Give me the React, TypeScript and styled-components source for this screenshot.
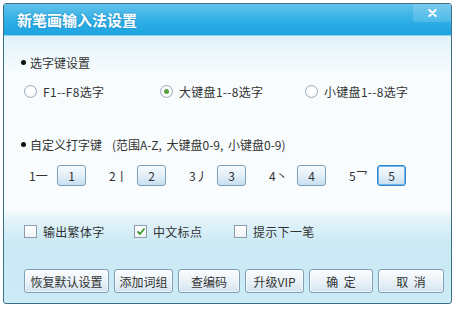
import React from "react";
import styled, { createGlobalStyle } from "styled-components";

const Global = createGlobalStyle`
  html, body {
    margin: 0;
    padding: 0;
    background: #ffffff;
  }
  body {
    font-family: "Noto Sans CJK SC", "Noto Sans", sans-serif;
    font-size: 12px;
    color: #333333;
  }
`;

const SWindow = styled.div`
  margin: 3px 0 0 3px;
  width: 447px;
  height: 299px;
  border: 1px solid #3f6f86;
  border-radius: 3px;
  overflow: hidden;
  display: flex;
  flex-direction: column;
  background: linear-gradient(
    to bottom,
    #bfe6f4 0px,
    #e6f5fa 40px,
    #f8fcfd 70px,
    #f8fcfd 205px,
    #e4f3f9 215px,
    #c9e9f5 240px,
    #cdebf6 100%
  );
`;

const STitleBar = styled.div`
  height: 31px;
  display: flex;
  align-items: center;
  justify-content: space-between;
  padding-left: 13px;
  background: linear-gradient(to bottom, #62c3ec 0%, #2eaee6 55%, #1da4e0 100%);
  border-bottom: 1px solid #8fd3ef;
`;

const STitle = styled.h1`
  margin: 0;
  font-size: 15px;
  font-weight: 700;
  color: #ffffff;
  text-shadow: 0 0 2px rgba(0, 80, 130, 0.45);
`;

const SClose = styled.div`
  align-self: flex-start;
  width: 38px;
  height: 18px;
  display: flex;
  align-items: center;
  justify-content: center;
  background: linear-gradient(to bottom, #78cbee, #4cb9e8);
  border-bottom-left-radius: 2px;
`;

const SBody = styled.div`
  flex: 1;
  display: flex;
  flex-direction: column;
  padding: 0 0 0 17px;
`;

const SHeading = styled.div<{ $top: number }>`
  margin-top: ${(p) => p.$top}px;
  height: 16px;
  display: flex;
  align-items: center;
  gap: 4px;
  white-space: pre;
  &::before {
    content: "";
    width: 5px;
    height: 5px;
    border-radius: 50%;
    background: #111111;
  }
`;

const SRange = styled.span`
  margin-left: 6px;
  word-spacing: 2px;
`;

const SRow = styled.div<{ $top: number }>`
  margin-top: ${(p) => p.$top}px;
  display: flex;
  align-items: center;
`;

const SOption = styled.label<{ $width: number }>`
  width: ${(p) => p.$width}px;
  display: flex;
  align-items: center;
  gap: 6px;
  padding-left: 3px;
  box-sizing: border-box;
  letter-spacing: 0.3px;
`;

const SRadio = styled.span<{ $checked?: boolean }>`
  width: 13px;
  height: 13px;
  border-radius: 50%;
  border: 1px solid #9ea9b8;
  box-sizing: border-box;
  background: radial-gradient(circle at 50% 40%, #ffffff 40%, #e8ecf2 100%);
  display: flex;
  align-items: center;
  justify-content: center;
  &::after {
    content: "";
    display: ${(p) => (p.$checked ? "block" : "none")};
    width: 5px;
    height: 5px;
    border-radius: 50%;
    background: #5aa03a;
  }
`;

const SCheck = styled.span`
  width: 13px;
  height: 13px;
  border: 1px solid #8f9caa;
  box-sizing: border-box;
  background: linear-gradient(to bottom, #ffffff, #f1f3f6);
  display: flex;
  align-items: center;
  justify-content: center;
`;

const SKeyGroup = styled.div`
  width: 80px;
  display: flex;
  align-items: center;
`;

const SStroke = styled.span`
  width: 36px;
  padding-left: 8px;
  box-sizing: border-box;
  white-space: nowrap;
`;

const SKey = styled.div<{ $active?: boolean }>`
  width: 29px;
  height: 21px;
  box-sizing: border-box;
  border: 1px solid ${(p) => (p.$active ? "#2f86cf" : "#7e9fb8")};
  box-shadow: ${(p) => (p.$active ? "inset 0 0 0 1px #6fb5e8" : "none")};
  border-radius: 3px;
  background: linear-gradient(to bottom, #f6fafd 0%, #e3eff8 50%, #c7dff1 100%);
  display: flex;
  align-items: center;
  justify-content: center;
`;

const SFooter = styled.div`
  margin-top: auto;
  margin-bottom: 10px;
  margin-left: 3px;
  display: flex;
  gap: 5px;
`;

const SButton = styled.button<{ $width: number }>`
  width: ${(p) => p.$width}px;
  height: 24px;
  padding: 0;
  font-family: "Noto Sans CJK SC", "Noto Sans", sans-serif;
  font-size: 12px;
  color: #333333;
  word-spacing: 3px;
  border: 1px solid #7f9fb5;
  border-radius: 3px;
  background: linear-gradient(to bottom, #fbfdfe 0%, #eaf2f8 50%, #d3e4f0 100%);
  box-shadow: inset 0 0 0 1px rgba(255, 255, 255, 0.6);
`;

const CloseIcon = () => (
  <svg width="9" height="8" viewBox="0 0 9 8">
    <path d="M1.3 1 L7.7 7 M7.7 1 L1.3 7" stroke="#ffffff" strokeWidth="2" strokeLinecap="round" />
  </svg>
);

const Tick = () => (
  <svg width="10" height="9" viewBox="0 0 10 9">
    <path d="M1.5 4.5 L4 7 L8.5 1.5" fill="none" stroke="#3d9a2a" strokeWidth="1.8" />
  </svg>
);

const strokes = ["一", "丨", "丿", "丶", "乛"];
const buttons = [
  { label: "恢复默认设置", width: 85 },
  { label: "添加词组", width: 59 },
  { label: "查编码", width: 62 },
  { label: "升级VIP", width: 59 },
  { label: "确 定", width: 64 },
  { label: "取 消", width: 66 },
];

const App = () => {
  return (
    <>
      <Global />
      <SWindow>
        <STitleBar>
          <STitle>新笔画输入法设置</STitle>
          <SClose>
            <CloseIcon />
          </SClose>
        </STitleBar>
        <SBody>
          <SHeading $top={18}>选字键设置</SHeading>
          <SRow $top={13}>
            <SOption $width={136}>
              <SRadio />
              F1--F8选字
            </SOption>
            <SOption $width={145}>
              <SRadio $checked />
              大键盘1--8选字
            </SOption>
            <SOption $width={140}>
              <SRadio />
              小键盘1--8选字
            </SOption>
          </SRow>
          <SHeading $top={36}>
            自定义打字键<SRange>(范围A-Z, 大键盘0-9, 小键盘0-9)</SRange>
          </SHeading>
          <SRow $top={13}>
            {strokes.map((s, i) => (
              <SKeyGroup key={s}>
                <SStroke>
                  {i + 1}
                  {s}
                </SStroke>
                <SKey $active={i === 4}>{i + 1}</SKey>
              </SKeyGroup>
            ))}
          </SRow>
          <SRow $top={37}>
            <SOption $width={110}>
              <SCheck />
              输出繁体字
            </SOption>
            <SOption $width={100}>
              <SCheck>
                <Tick />
              </SCheck>
              中文标点
            </SOption>
            <SOption $width={120}>
              <SCheck />
              提示下一笔
            </SOption>
          </SRow>
          <SFooter>
            {buttons.map((b) => (
              <SButton key={b.label} $width={b.width}>
                {b.label}
              </SButton>
            ))}
          </SFooter>
        </SBody>
      </SWindow>
    </>
  );
};

export default App;
